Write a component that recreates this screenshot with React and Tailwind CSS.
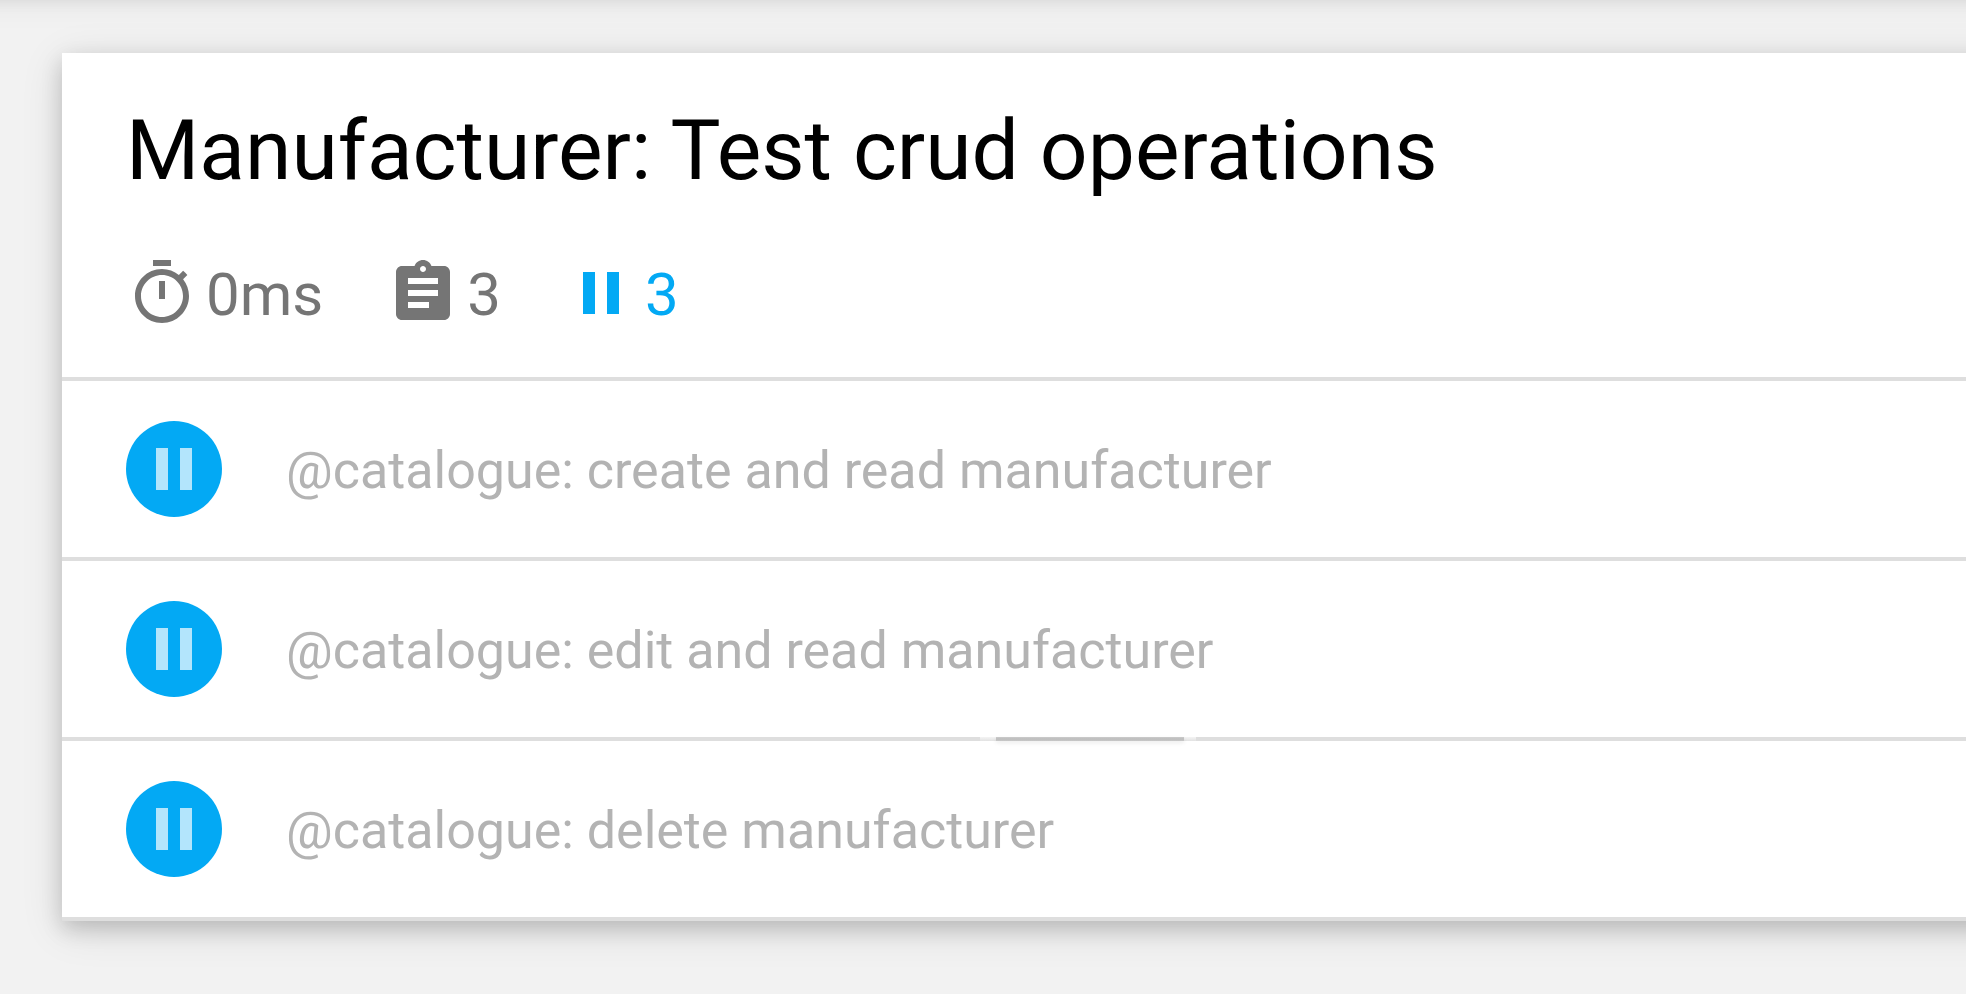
const PAUSE = 'M6 19h4V5H6v14zm8-14v14h4V5h-4z';
const TIMER =
  'M15 1H9v2h6V1zm-4 13h2V8h-2v6zm8.03-6.61l1.42-1.42c-.43-.51-.9-.99-1.41-1.41l-1.42 1.42C16.07 4.74 14.12 4 12 4c-4.97 0-9 4.03-9 9s4.02 9 9 9 9-4.03 9-9c0-2.12-.74-4.07-1.97-5.61zM12 20c-3.87 0-7-3.13-7-7s3.13-7 7-7 7 3.13 7 7-3.13 7-7 7z';
const CLIPBOARD =
  'M19 3h-4.18C14.4 1.84 13.3 1 12 1c-1.3 0-2.4.84-2.82 2H5c-1.1 0-2 .9-2 2v14c0 1.1.9 2 2 2h14c1.1 0 2-.9 2-2V5c0-1.1-.9-2-2-2zm-7 0c.55 0 1 .45 1 1s-.45 1-1 1-1-.45-1-1 .45-1 1-1zm2 14H7v-2h7v2zm3-4H7v-2h10v2zm0-4H7V7h10v2z';

const tests = [
  { title: '@catalogue: create and read manufacturer' },
  { title: '@catalogue: edit and read manufacturer' },
  { title: '@catalogue: delete manufacturer', raised: true },
];

function Icon({ path }) {
  return (
    <svg viewBox="0 0 24 24" className="size-[72px] shrink-0" fill="currentColor" aria-hidden="true">
      <path d={path} />
    </svg>
  );
}

function Stat({ path, children, className = 'text-[#757575]' }) {
  return (
    <li className={`flex h-[72px] items-center gap-2 ${className}`}>
      <Icon path={path} />
      <span className="pt-1 text-[60px] leading-[72px]">{children}</span>
    </li>
  );
}

function TestRow({ title, raised }) {
  return (
    <li className="relative flex h-[180px] items-center gap-16 border-b-4 border-[#dedede] px-16">
      {raised && (
        <span className="absolute -top-1 left-[918px] flex h-1 w-[216px] bg-linear-to-b from-[#f4f4f4] to-[#e2e2e2] pr-3 pl-4">
          <span className="flex-1 bg-linear-to-b from-[#cccccc] via-[#bdbdbd] to-[#c8c8c8] shadow-[0_2px_4px_rgba(0,0,0,0.08)]" />
        </span>
      )}
      <span className="flex size-24 shrink-0 items-center justify-center rounded-full bg-[#03a9f4] text-[#b3e5fc]">
        <Icon path={PAUSE} />
      </span>
      <h2 className="pt-1 text-[52px] leading-[60px] text-[#b3b3b3]">{title}</h2>
    </li>
  );
}

export default function App() {
  return (
    <div className="flow-root min-h-screen overflow-hidden bg-[#f2f2f2] font-['Roboto',sans-serif]">
      <header className="-mx-16 -mt-20 h-16 shadow-[0_8px_20px_0_rgba(0,0,0,0.16),0_8px_40px_0_rgba(0,0,0,0.12)]" />
      <main className="-mr-16 pt-[69px] pb-[73px] pl-[62px]">
        <section className="bg-white shadow-[0_8px_20px_0_rgba(0,0,0,0.16),0_8px_40px_0_rgba(0,0,0,0.12)]">
          <header className="border-b-4 border-[#dedede] px-16 pt-[50px] pb-12">
            <h1 className="text-[84px] leading-[96px] text-black">Manufacturer: Test crud operations</h1>
            <ul className="mt-[58px] flex gap-16">
              <Stat path={TIMER}>0ms</Stat>
              <Stat path={CLIPBOARD}>3</Stat>
              <Stat path={PAUSE} className="text-[#03a9f4]">3</Stat>
            </ul>
          </header>
          <ul>
            {tests.map((test) => (
              <TestRow key={test.title} {...test} />
            ))}
          </ul>
        </section>
      </main>
    </div>
  );
}
